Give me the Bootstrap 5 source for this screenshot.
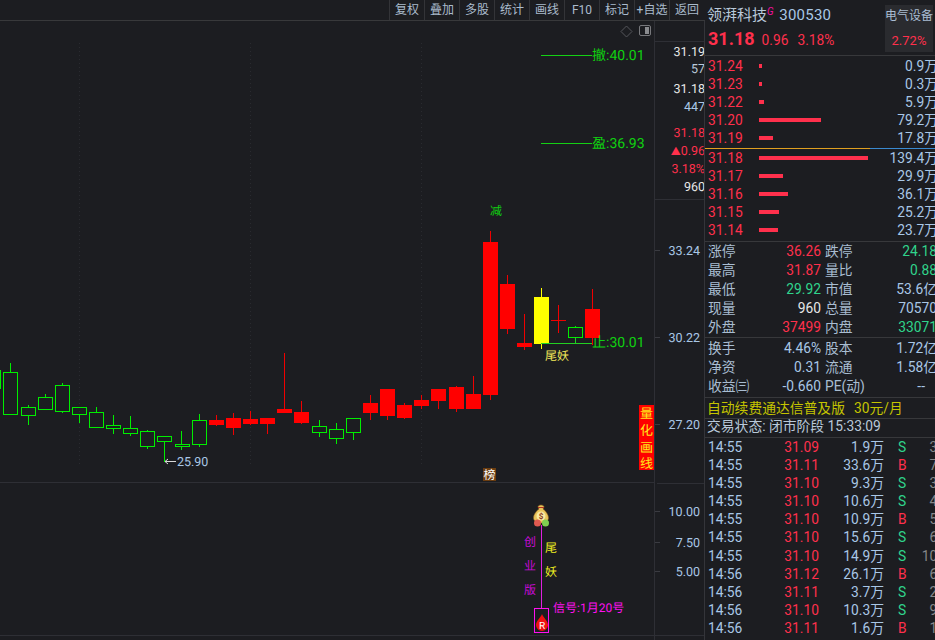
<!DOCTYPE html>
<html lang="zh">
<head>
<meta charset="utf-8">
<title>领湃科技 300530</title>
<link rel="stylesheet" href="https://cdn.jsdelivr.net/npm/bootstrap@5.3.0/dist/css/bootstrap.min.css">
<style>
html,body{margin:0;height:640px;overflow:hidden;background:#1c1d21}
body{font-family:Roboto,"Noto Sans CJK SC",sans-serif;font-size:13.8px;color:#a9c7e6;line-height:18px}
.stage{width:935px;height:640px;overflow:hidden}
.lefty{width:705px;flex:none}
.tools{height:21px;border-bottom:1px solid #38393b;padding-left:389px}
.tools .btn{width:35px;height:20px;padding:0;border:0;border-left:1px solid #333438;border-radius:0;font-size:12px;line-height:20px;color:#aabbcc;white-space:nowrap;overflow:hidden}
.plot{height:619px;border-right:1px solid #34353a}
.plot svg{display:block;font-family:Roboto,"Noto Sans CJK SC",sans-serif;font-size:12.5px}
.pn{width:230px;flex:none;overflow:hidden}
.hd{height:55px;padding:0 2px 0 2px}
.nm{font-size:15px;color:#b9c9da;white-space:nowrap;padding-top:5px;line-height:20px}
.nm sup{color:#f0109a;font-style:italic;font-size:10px;top:-5px;margin-right:2px;margin-left:0}
.nm b{font-weight:400;letter-spacing:.2px;color:#a9c7e6}
.qt{color:#ff304c;white-space:nowrap;line-height:24px;padding-top:2px;padding-left:1px}
.qt strong{font-size:18px;margin-right:7px}
.qt span{margin-right:9px}
.sect{width:48px;height:47px;margin-top:5px;background:#2a2b2f;font-size:12px;line-height:14px;color:#a9bdd2;text-align:center;padding-top:4px;white-space:nowrap}
.sect i{display:block;font-style:normal;color:#ff304c;font-size:13px;margin-top:11px}
.rule{height:1px;background:#37383b}
.rule2{height:1px;background:linear-gradient(90deg,#e0a020 0,#e0a020 165px,#3a8ad0 165px)}
.bk{padding:1px 0 1px 3px}
.bk2{padding:0 0 2px 3px}
.bk-row{height:18px;white-space:nowrap}
.bk-p{width:51px;flex:none;color:#ff304c}
.bk-bar{height:4px;background:#ff304c}
.bk-q{margin-left:auto;margin-right:-3px;color:#a9c7e6}
.st{padding-left:3px}
.st2{padding-top:1px;padding-bottom:1px}
.st-row{display:grid;grid-template-columns:40px 73px 4px 40px 72px;height:19px;line-height:19px;white-space:nowrap}
.st-row>:nth-child(2),.st-row>:nth-child(5){text-align:right}
.st-row>:nth-child(4){color:#a9bdd2}
.st-row>:first-child{color:#a9bdd2}
.st-row>:nth-child(3){visibility:hidden}
.up{color:#ff304c}.dn{color:#30d48c}.wt{color:#e6e6e6}
.st-row>.pe-end{padding-right:12px}
.ad{height:20px;line-height:20px;padding-left:2px;color:#c4c400;white-space:nowrap}
.ad span{margin-left:9px}
.stat{height:18px;line-height:15px;padding-left:2px;color:#b9c9da;white-space:nowrap}
.tk{padding-left:3px}
.tk-row{display:grid;grid-template-columns:42px 69px 65px 34px 27px;height:18.1px;line-height:18.1px;white-space:nowrap}
.tk-row>:nth-child(2),.tk-row>:nth-child(3),.tk-row>:nth-child(5){text-align:right}
.tk-row>:nth-child(2){color:#ff304c}
.tk-row>:nth-child(4){padding-left:14px}
.tk-row>:nth-child(5){color:#85878a}
</style>
</head>
<body>
<div class="stage d-flex">
  <div class="lefty">
    <div class="tools d-flex">
      <button class="btn" type="button">复权</button>
      <button class="btn" type="button">叠加</button>
      <button class="btn" type="button">多股</button>
      <button class="btn" type="button">统计</button>
      <button class="btn" type="button">画线</button>
      <button class="btn" type="button">F10</button>
      <button class="btn" type="button">标记</button>
      <button class="btn" type="button">+自选</button>
      <button class="btn" type="button">返回</button>
    </div>
    <div class="plot">
      <svg width="704" height="619" viewBox="0 21 704 619" xmlns="http://www.w3.org/2000/svg" text-rendering="geometricPrecision">
        <path d="M654.5 21V640M655 41.5H705M655 199.5H705M0 482.5H654M657 483.5H705M0 635.5H705" stroke="#2e2f35" fill="none"/>
        <path d="M655 250.5H660M655 337.5H660M655 424.5H660M655 511.5H660M655 542.5H660M655 571.5H660" stroke="#3a3b41"/>
        <path d="M79.5 43V467M250.5 43V467M421.5 43V467" stroke="#2a2b30" stroke-dasharray="1 3"/>
        <path d="M626.5 26l5.5 5.5-5.500 5.500-5.500-5.500z" fill="none" stroke="#55565b"/>
        <rect x="639.500" y="25.500" width="11" height="10" rx="1.500" fill="none" stroke="#77787c"/>
        <rect x="645" y="27" width="4" height="7" fill="#8a8b8f"/>
        <g fill="none" stroke="#00ee00">
          <path d="M.5 370V389M10.500 363V372M28.500 405V407M28.500 416V425M45.500 394V397M62.500 383V385M62.500 412V413M79.500 415V423M96.500 407V412M113.500 415V425M113.500 429V434M130.500 416V428M130.500 434V436M147.500 430V431M147.500 447V449M164.500 442V462M181.500 431V444M181.500 447V450M199.500 414V420M199.500 445V447M319.500 420V426M319.500 433V437M336.500 423V429M336.500 439V444M353.500 433V440M575.500 326V327M575.500 338V343"/>
          <rect x="3.500" y="372.500" width="14" height="42"/>
          <rect x="21.500" y="407.500" width="14" height="8"/>
          <rect x="38.500" y="397.500" width="14" height="12"/>
          <rect x="55.500" y="385.500" width="14" height="26"/>
          <rect x="72.500" y="407.500" width="14" height="7"/>
          <rect x="89.500" y="412.500" width="14" height="15"/>
          <rect x="106.500" y="425.500" width="14" height="3"/>
          <rect x="123.500" y="428.500" width="14" height="5"/>
          <rect x="140.500" y="431.500" width="14" height="15"/>
          <rect x="157.500" y="436.500" width="14" height="5"/>
          <rect x="175.500" y="444.500" width="14" height="2"/>
          <rect x="192.500" y="420.500" width="14" height="24"/>
          <rect x="312.500" y="426.500" width="14" height="6"/>
          <rect x="329.500" y="429.500" width="14" height="9"/>
          <rect x="346.500" y="418.500" width="14" height="14"/>
          <rect x="568.500" y="327.500" width="14" height="10"/>
        </g>
        <path stroke="#f00000" fill="none" d="M216.500 415V426M233.500 413V435M250.500 411V425M267.500 418V434M284.500 353V413M301.500 401V424M370.500 395V420M387.500 389V420M404.500 403V419M421.500 395V409M438.500 389V409M456.500 386V412M473.500 376V409M490.500 231V400M507.500 275V334M524.500 314V350M558.500 305V333M592.500 289V345M551 320.500H566"/>
        <g fill="#ff0000">
          <rect x="209" y="420" width="15" height="5"/>
          <rect x="226" y="418" width="15" height="10"/>
          <rect x="243" y="419" width="15" height="5"/>
          <rect x="260" y="418" width="15" height="6"/>
          <rect x="277" y="409" width="15" height="4"/>
          <rect x="294" y="412" width="15" height="11"/>
          <rect x="363" y="403" width="15" height="10"/>
          <rect x="380" y="389" width="15" height="27"/>
          <rect x="397" y="405" width="15" height="13"/>
          <rect x="414" y="400" width="15" height="6"/>
          <rect x="431" y="389" width="15" height="12"/>
          <rect x="449" y="387" width="15" height="22"/>
          <rect x="466" y="394" width="15" height="15"/>
          <rect x="483" y="242" width="15" height="153"/>
          <rect x="500" y="284" width="15" height="45"/>
          <rect x="517" y="343" width="15" height="4"/>
          <rect x="585" y="309" width="15" height="29"/>
        </g>
        <path d="M541.500 288V349" stroke="#ffff00"/>
        <rect x="534" y="297" width="15" height="47" fill="#ffff00"/>
        <path d="M541 55.500H592M541 143.500H592" stroke="#14d014"/>
        <path d="M541 343.500H592M575.500 337V343" stroke="#22d022"/>
        <g fill="#10d010" font-size="14">
          <text x="592" y="60">撤:40.01</text>
          <text x="592" y="148">盈:36.93</text>
          <text x="592" y="347">止:30.01</text>
          <text x="490" y="215" font-size="12">减</text>
        </g>
        <text x="545" y="360" font-size="12" fill="#f2e85a">尾妖</text>
        <path d="M165 461.500H176M168 459l-3 2.500 3 2.500" stroke="#d8d8d8" fill="none"/>
        <text x="177" y="466" font-size="12.500" fill="#a9c7e6">25.90</text>
        <rect x="639" y="405" width="15" height="65" fill="#ff0000"/>
        <g fill="#ffe81a" font-size="13" text-anchor="middle">
          <text x="646.500" y="418">量</text>
          <text x="646.500" y="435">化</text>
          <text x="646.500" y="452">画</text>
          <text x="646.500" y="468">线</text>
        </g>
        <rect x="483" y="468" width="13" height="13" fill="#6b3d10"/>
        <text x="489.500" y="479" font-size="12" fill="#fff" text-anchor="middle">榜</text>
        <g text-anchor="end" font-size="12.500">
          <text x="705" y="55.500" fill="#e8e8e8">31.19</text>
          <text x="705" y="73" fill="#b9c9da">57</text>
          <text x="705" y="93" fill="#e8e8e8">31.18</text>
          <text x="705" y="111" fill="#a9c7e6">447</text>
          <text x="705" y="137" fill="#ff304c">31.18</text>
          <text x="705" y="155" fill="#ff304c"><tspan font-size="10">▲</tspan>0.96</text>
          <text x="705" y="173" fill="#ff304c">3.18%</text>
          <text x="705" y="191" fill="#e8e8e8">960</text>
          <text x="700" y="254.500" fill="#a9c7e6">33.24</text>
          <text x="700" y="341.500" fill="#a9c7e6">30.22</text>
          <text x="700" y="428.500" fill="#a9c7e6">27.20</text>
          <text x="700" y="515.500" fill="#a9c7e6">10.00</text>
          <text x="700" y="546.500" fill="#a9c7e6">7.50</text>
          <text x="700" y="575.500" fill="#a9c7e6">5.00</text>
        </g>
        <path d="M541.500 525V608" stroke="#e020e0"/>
        <path d="M541 505c-2 0-3 1-3 2l1 2c-3 2-5.500 6-5.500 9 0 3 3.500 5 7.500 5s7.500-2 7.500-5c0-3-2.500-7-5.500-9l1-2c0-1-1-2-3-2z" fill="#e8c45a" stroke="#8a5a20" stroke-width=".6"/>
        <path d="M538 507.500h6" stroke="#b03020"/>
        <circle cx="541" cy="516" r="4.500" fill="#f8e9a0"/>
        <text x="541" y="519" font-size="8" font-weight="700" fill="#8a3a20" text-anchor="middle">$</text>
        <circle cx="537.500" cy="523" r="3.500" fill="#e05a50"/>
        <circle cx="545.500" cy="523" r="3.500" fill="#7fd050"/>
        <g fill="#c80ad8" font-size="12" text-anchor="middle">
          <text x="530" y="546">创</text>
          <text x="530" y="570">业</text>
          <text x="530" y="594">版</text>
        </g>
        <g fill="#eeee20" font-size="12" text-anchor="middle">
          <text x="551" y="552">尾</text>
          <text x="551" y="576">妖</text>
        </g>
        <text x="553" y="612" font-size="12" fill="#ff10f0">信号:1月20号</text>
        <rect x="534.500" y="608.500" width="14" height="24" fill="none" stroke="#ff10f0"/>
        <path d="M542 614c-1 3-6 7-6 11 0 3 3 6 6 6s6-3 6-6c0-4-5-8-6-11z" fill="#f01010"/>
        <text x="542" y="628.500" font-size="10" fill="#fff" text-anchor="middle">R</text>
      </svg>
    </div>
  </div>
  <div class="pn">
    <div class="hd d-flex justify-content-between">
      <div>
        <div class="nm">领湃科技<sup>G</sup> <b>300530</b></div>
        <div class="qt"><strong>31.18</strong><span>0.96</span><span>3.18%</span></div>
      </div>
      <div class="sect">电气设备<i>2.72%</i></div>
    </div>
    <div class="rule"></div>
    <div class="bk">
      <div class="bk-row d-flex align-items-center"><div class="bk-p">31.24</div><div class="bk-bar" style="width:3px"></div><div class="bk-q">0.9万</div></div>
      <div class="bk-row d-flex align-items-center"><div class="bk-p">31.23</div><div class="bk-bar" style="width:3px"></div><div class="bk-q">0.3万</div></div>
      <div class="bk-row d-flex align-items-center"><div class="bk-p">31.22</div><div class="bk-bar" style="width:5px"></div><div class="bk-q">5.9万</div></div>
      <div class="bk-row d-flex align-items-center"><div class="bk-p">31.20</div><div class="bk-bar" style="width:62px"></div><div class="bk-q">79.2万</div></div>
      <div class="bk-row d-flex align-items-center"><div class="bk-p">31.19</div><div class="bk-bar" style="width:14px"></div><div class="bk-q">17.8万</div></div>
    </div>
    <div class="rule2"></div>
    <div class="bk2">
      <div class="bk-row d-flex align-items-center"><div class="bk-p">31.18</div><div class="bk-bar" style="width:109px"></div><div class="bk-q">139.4万</div></div>
      <div class="bk-row d-flex align-items-center"><div class="bk-p">31.17</div><div class="bk-bar" style="width:24px"></div><div class="bk-q">29.9万</div></div>
      <div class="bk-row d-flex align-items-center"><div class="bk-p">31.16</div><div class="bk-bar" style="width:29px"></div><div class="bk-q">36.1万</div></div>
      <div class="bk-row d-flex align-items-center"><div class="bk-p">31.15</div><div class="bk-bar" style="width:20px"></div><div class="bk-q">25.2万</div></div>
      <div class="bk-row d-flex align-items-center"><div class="bk-p">31.14</div><div class="bk-bar" style="width:19px"></div><div class="bk-q">23.7万</div></div>
    </div>
    <div class="rule"></div>
    <div class="st">
      <div class="st-row"><span>涨停</span><span class="up">36.26</span><span></span><span>跌停</span><span class="dn">24.18</span></div>
      <div class="st-row"><span>最高</span><span class="up">31.87</span><span></span><span>量比</span><span class="dn">0.88</span></div>
      <div class="st-row"><span>最低</span><span class="dn">29.92</span><span></span><span>市值</span><span>53.6亿</span></div>
      <div class="st-row"><span>现量</span><span class="wt">960</span><span></span><span>总量</span><span>70570</span></div>
      <div class="st-row"><span>外盘</span><span class="up">37499</span><span></span><span>内盘</span><span class="dn">33071</span></div>
    </div>
    <div class="rule"></div>
    <div class="st st2">
      <div class="st-row"><span>换手</span><span>4.46%</span><span></span><span>股本</span><span>1.72亿</span></div>
      <div class="st-row"><span>净资</span><span>0.31</span><span></span><span>流通</span><span>1.58亿</span></div>
      <div class="st-row"><span>收益㈢</span><span>-0.660</span><span></span><span>PE(动)</span><span class="pe-end">--</span></div>
    </div>
    <div class="rule"></div>
    <div class="ad">自动续费通达信普及版<span>30元/月</span></div>
    <div class="rule"></div>
    <div class="stat">交易状态: 闭市阶段 15:33:09</div>
    <div class="rule"></div>
    <div class="tk">
      <div class="tk-row"><span>14:55</span><span>31.09</span><span>1.9万</span><span class="dn">S</span><span>31</span></div>
      <div class="tk-row"><span>14:55</span><span>31.11</span><span>33.6万</span><span class="up">B</span><span>75</span></div>
      <div class="tk-row"><span>14:55</span><span>31.10</span><span>9.3万</span><span class="dn">S</span><span>32</span></div>
      <div class="tk-row"><span>14:55</span><span>31.10</span><span>10.6万</span><span class="dn">S</span><span>41</span></div>
      <div class="tk-row"><span>14:55</span><span>31.10</span><span>10.9万</span><span class="up">B</span><span>53</span></div>
      <div class="tk-row"><span>14:55</span><span>31.10</span><span>15.6万</span><span class="dn">S</span><span>62</span></div>
      <div class="tk-row"><span>14:55</span><span>31.10</span><span>14.9万</span><span class="dn">S</span><span>105</span></div>
      <div class="tk-row"><span>14:56</span><span>31.12</span><span>26.1万</span><span class="up">B</span><span>61</span></div>
      <div class="tk-row"><span>14:56</span><span>31.11</span><span>3.7万</span><span class="dn">S</span><span>21</span></div>
      <div class="tk-row"><span>14:56</span><span>31.10</span><span>10.3万</span><span class="dn">S</span><span>91</span></div>
      <div class="tk-row"><span>14:56</span><span>31.11</span><span>1.6万</span><span class="up">B</span><span>13</span></div>
    </div>
  </div>
</div>
<script src="https://cdn.jsdelivr.net/npm/bootstrap@5.3.0/dist/js/bootstrap.bundle.min.js"></script>
</body>
</html>
